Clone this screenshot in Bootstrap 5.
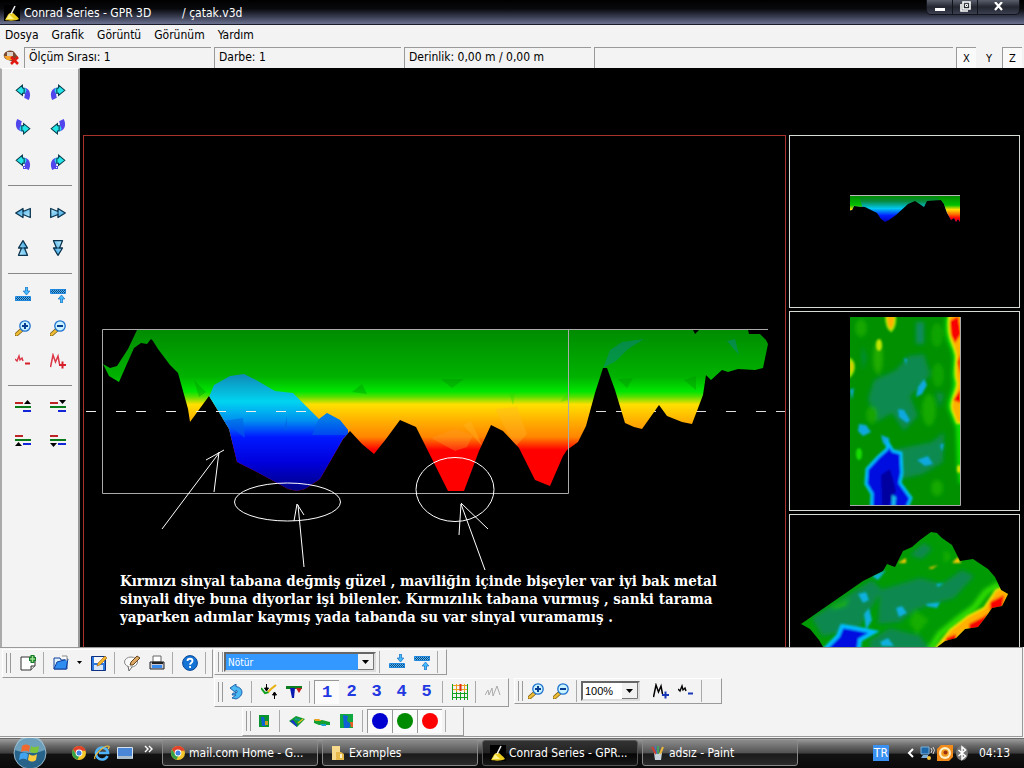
<!DOCTYPE html>
<html lang="tr">
<head>
<meta charset="utf-8">
<meta name="viewport" content="width=device-width, initial-scale=1">
<title>Conrad Series - GPR 3D</title>
<link href="https://cdn.jsdelivr.net/npm/bootstrap@5.3.0/dist/css/bootstrap.min.css" rel="stylesheet">
<style>
body{font-family:"DejaVu Sans Condensed","DejaVu Sans",sans-serif;font-size:12px;line-height:16px;color:#000;background:#f3f3f3}
svg{display:block;flex:none}
button{font:inherit;color:inherit}
.ico{width:16px;height:16px}
.title-bar{height:25px;background:linear-gradient(#000 0,#08090c 35%,#35394c 65%,#6b7190 96%,#1b1d2c 96%);color:#fff;white-space:pre}
.win-keys{height:15px;border:1px solid #12141c;border-top:0;border-radius:0 0 5px 5px;background:linear-gradient(#5a5e6c,#23262f 50%,#3a3f50);margin-right:4px}
.win-keys button{border:0;background:none;padding:0 0 2px;color:#fff;width:25px;display:flex;justify-content:center;align-items:center}
.win-keys button+button{border-left:1px solid #12141c}
.win-keys button:last-child{width:42px}
.menu-bar{height:22px;padding:0 5px 2px;gap:13px}
.menu-bar a{color:#000;text-decoration:none}
.status-bar{height:21px;gap:3px;padding:0 2px 0 3px}
.status-cell{border-left:1px solid #999;border-top:1px solid #999;padding:1px 4px;flex:none;white-space:nowrap}
.cell-m{width:187px}
.axis-key{width:20px;border:0;background:none;padding:2px 0 0;font-size:11px;line-height:15px}
.axis-key.on{border-left:1px solid #999;border-top:1px solid #999;background:#fafafa;padding-top:1px}
.tool-side{width:80px;flex:none;border-top:1px solid #fff;border-left:2px solid #aaa;border-right:2px solid #999;padding:0 3px}
.tool-side section{display:grid;grid-template-columns:35px 35px;grid-auto-rows:35px;justify-content:center}
.tool-side hr{margin:0 3px;border-color:#888;opacity:1}
.tool-side button,.tb-key{border:0;background:none;padding:0;display:flex;align-items:center;justify-content:center}
.t-turn{padding:5px 0 6px}.t-move{padding:9px 0 8px}
.tool-side .t-zoom,.tool-side .t-level{grid-auto-rows:33px;padding:4px 0 8px}
.stage{background:#000;padding:67px 4px 0 3px;gap:3px}
.view-main{border:1px solid #a8322c;border-bottom:0}
.view-main svg,.view-col svg{width:100%;height:auto}
.view-col{width:231px;gap:3px;flex:none}
.view-s{border:1px solid #d4dcd4}
.note-text{font:bold 15px "DejaVu Serif Condensed","DejaVu Serif",serif;fill:#fff}
.dock{border-top:1px solid #999;border-bottom:1px solid #999;border-right:1px solid #999;padding:1px 0 0 2px;margin:0 1px 1px 0}
.dock-row{height:29px}
.row-2{margin-left:212px;gap:5px}.row-3{margin-left:240px}
.tbar{height:29px;border:1px solid #fff;border-right-color:#999;border-bottom-color:#999;padding:0 3px 2px;flex:none}
.tbar.low{height:26px;padding-bottom:0}
.tbar-main{width:211px}.tbar-pal{width:233px;margin-left:1px}.tbar-lay{width:295px}.tbar-mag{width:208px}.tbar-view{width:222px}
.grip{width:5px;height:20px;border:solid #999;border-width:0 1px;flex:none}
.vsep{width:1px;height:22px;background:#aaa;margin:0 4px 0 3px;flex:none}
.tb-key{width:25px;height:24px;flex:none}
.tb-key.on{background:#fbfbfb;border-left:1px solid #999;border-top:1px solid #999}
.tb-num{font:bold 17px "Liberation Mono",monospace;color:#2238e0}
.caret-key{width:13px}
.pick{position:relative;flex:none}
.pick select{display:block;width:100%;height:20px;border:2px solid #666;border-right-color:#ddd;border-bottom-color:#ddd;border-radius:0;padding:0 2px;font:11px/15px "DejaVu Sans Condensed",sans-serif;background:#fff;appearance:none}
.pick svg{position:absolute;right:2px;top:2px;pointer-events:none}
.pick-pal{width:152px;margin-left:1px}.pick-pal select{background:#3398ff;color:#fff;font-size:10px}
.pick-mag{width:59px}.pick-mag select{font-family:"Liberation Sans",sans-serif}
.task-bar{height:30px;background:linear-gradient(#555 0,#999 5%,#6a6a6a 25%,#3d3d3d 50%,#121212 54%,#090909);color:#fff}
.quick{gap:7px;padding-left:12px}
.quick button{border:0;background:none;padding:0;color:#fff}
.task-list{gap:4px;margin-left:9px;min-width:0}
.task-win{width:156px;height:26px;border:1px solid #888;border-radius:3px;background:linear-gradient(#888,#555 48%,#1b1b1b 54%,#2b2b2b);color:#fff;padding:0 7px;gap:3px;text-align:left;white-space:nowrap}
.task-win.on{background:linear-gradient(#333,#222 48%,#050505 54%,#181818);border-color:#555}
.tray{gap:1px;margin-left:auto;padding-right:14px}
.lang-tag{width:16px;height:16px;background:#3a90f0;text-align:center;margin-right:17px}
</style>
</head>
<body class="d-flex flex-column min-vh-100">
<svg width="0" height="0" class="position-absolute" aria-hidden="true">
<defs>
<linearGradient id="sky" x1="0" y1="0" x2="1" y2="1"><stop offset="0" stop-color="#bff0ff"/><stop offset="1" stop-color="#2b9be0"/></linearGradient>
<pattern id="chk" width="2" height="2" patternUnits="userSpaceOnUse"><path fill="#4ab4ff" d="M0 0h2v2H0z"/><path fill="#134a7c" d="M0 0h1v1H0zM1 1h1v1H1z"/></pattern>
<symbol id="turn" viewBox="1 1 14 14"><path d="M8 4c5 0 8 5 5 11l-4-2c1-3 1-4-1-4z" fill="#5046ec"/><path d="M8 4c2 0 3 1 3 3l-1 2H8z" fill="#2bd4f0"/><path d="M2 6.500 7.500 2v2.500L9 5v4H7.500v2z" fill="#22e6e8" stroke="#073a4a" stroke-width=".9"/></symbol>
<symbol id="turn-dot" viewBox="0 0 16 16"><use href="#turn"/><path d="M8 12h3v3H8z" fill="#5046ec"/><path d="M9 13h1v1H9z" fill="#fff"/></symbol>
<symbol id="ff" viewBox="0 0 16 16"><path d="M.7 3.500 8 6.500V3.500l7.300 4.500L8 12.500v-3l-7.300 3z" fill="url(#sky)" stroke="#0b3550" stroke-width="1.300" stroke-linejoin="round"/><path d="M8 6.500v3" stroke="#0b3550"/></symbol>
<symbol id="press" viewBox="0 0 16 16"><path d="M0 10h16v4H0z" fill="url(#chk)"/><path d="M.5 9.500h15v4H.5z" fill="none" stroke="#1e86dc"/><path d="M10.500 0h2v4h2.300l-3.300 4-3.300-4h2.300z" fill="#45bcff" stroke="#126cc0" stroke-width=".7"/></symbol>
<symbol id="lens" viewBox="0 0 16 16"><path d="m1.500 14.500 5-4.500" stroke="#795a10" stroke-width="4" stroke-linecap="round"/><path d="m1.500 14.500 4.500-4" stroke="#eebd36" stroke-width="2.400" stroke-linecap="round"/><circle cx="10" cy="6" r="5.200" fill="#c9f3ff" stroke="#1d70ce" stroke-width="1.300"/><path d="M7 6h6" stroke="#063c92" stroke-width="2"/></symbol>
<symbol id="lens-p" viewBox="0 0 16 16"><use href="#lens"/><path d="M10 3v6" stroke="#063c92" stroke-width="2"/></symbol>
<symbol id="wave-s" viewBox="0 0 16 16"><path d="m0 6 2 2 2-5 1 4 2-2 1 3" fill="none" stroke="currentColor" stroke-width="1.400"/><path d="M10 10.500h5" stroke="var(--pm)" stroke-width="2"/></symbol>
<symbol id="wave-b" viewBox="0 0 16 16"><path d="M.5 14 3 2l2.500 7L8 3l1.500 8" fill="none" stroke="currentColor" stroke-width="1.500"/><path d="M9 12h7M12.500 8.500v7" stroke="var(--pm)" stroke-width="2"/></symbol>
<symbol id="lv-tri" viewBox="0 0 16 16"><path d="M0 3h8v2H0z" fill="#bd2424"/><path d="M0 7h16v2H0z" fill="#087a18"/><path d="M8 11h8v2H8z" fill="#1226d8"/></symbol>
<symbol id="chrome" viewBox="0 0 16 16"><circle cx="8" cy="8" r="7" fill="#f3c62b"/><path d="M2 4.500a7 7 0 0 1 12.700 1.300H8L6 10z" fill="#e2412c"/><path d="M2 4.500 5.500 10l2.800 1-1.800 3.800A7 7 0 0 1 2 4.500" fill="#34a148"/><circle cx="8" cy="8" r="3.400" fill="#fff"/><circle cx="8" cy="8" r="2.500" fill="#3f82e4"/></symbol>
<symbol id="gpr" viewBox="0 0 16 16"><path d="M0 0h16v16H0z" fill="#000"/><path d="M1 15c1-1 2-5 5-7h3c2 2 4 3 6 6-3 2-10 2-14 1" fill="#eacb20"/><path d="M5 9c-1 3-2 4-3 5h8z" fill="#fff28a"/><path d="m7 9 4-8" stroke="#eee" stroke-width="1.500"/></symbol>
<symbol id="drop" viewBox="0 0 16 16"><path d="M0 0h16v16H0z" fill="#f1f1f1"/><path d="M15.500 0v15.500H0" fill="none" stroke="#777"/><path d="M4 6h7L7.500 10z"/></symbol>
<linearGradient id="warm" gradientUnits="userSpaceOnUse" x1="0" y1="330" x2="0" y2="492"><stop offset="0" stop-color="#008c00"/><stop offset=".29" stop-color="#00b200"/><stop offset=".38" stop-color="#00e600"/><stop offset=".41" stop-color="#50e000"/><stop offset=".46" stop-color="#ffe000"/><stop offset=".56" stop-color="#ffb000"/><stop offset=".66" stop-color="#ff8600"/><stop offset=".74" stop-color="#ff0000"/></linearGradient>
<linearGradient id="cold" gradientUnits="userSpaceOnUse" x1="0" y1="373" x2="0" y2="492"><stop offset="0" stop-color="#1086b4"/><stop offset=".24" stop-color="#00d4f0"/><stop offset=".4" stop-color="#0090f0"/><stop offset=".54" stop-color="#0018ff"/><stop offset=".75" stop-color="#0000dc"/><stop offset="1" stop-color="#000080"/></linearGradient>
<linearGradient id="warm2" gradientUnits="userSpaceOnUse" x1="0" y1="196" x2="0" y2="222"><stop offset="0" stop-color="#008c00"/><stop offset=".35" stop-color="#00c000"/><stop offset=".52" stop-color="#ffe000"/><stop offset=".7" stop-color="#ff7000"/><stop offset=".85" stop-color="#f00"/></linearGradient>
<linearGradient id="cold2" gradientUnits="userSpaceOnUse" x1="0" y1="196" x2="0" y2="222"><stop offset="0" stop-color="#008c00"/><stop offset=".2" stop-color="#088a40"/><stop offset=".48" stop-color="#00c8f0"/><stop offset=".75" stop-color="#0020ff"/><stop offset="1" stop-color="#0000b0"/></linearGradient>
<filter id="b1" x="-30%" y="-30%" width="160%" height="160%"><feGaussianBlur stdDeviation="1"/></filter>
<filter id="b2" x="-50%" y="-50%" width="200%" height="200%"><feGaussianBlur stdDeviation="2.200"/></filter>
</defs>
</svg>

<header class="title-bar d-flex align-items-center ps-1">
  <svg class="ico me-1"><use href="#gpr"/></svg><span>Conrad Series - GPR 3D         / çatak.v3d</span>
  <div class="win-keys d-flex ms-auto align-self-start">
    <button aria-label="Simge durumuna küçült"><svg width="10" height="9"><path d="M0 6h10v3H0z" fill="#fff"/></svg></button>
    <button aria-label="Önceki boyut"><svg width="11" height="11" fill="none" stroke="#fff"><path d="M1 3v7h7" stroke-width="1.600"/><path d="M3 1h7v7H3z" stroke-width="1.600"/><path d="M5.500 3.500h2v2h-2z"/></svg></button>
    <button aria-label="Kapat"><svg width="10" height="9"><path d="m1 0 7 8M8 0 1 8" stroke="#fff" stroke-width="2.200"/></svg></button>
  </div>
</header>

<nav class="menu-bar d-flex align-items-center">
  <a href="#">Dosya</a><a href="#">Grafik</a><a href="#">Görüntü</a><a href="#">Görünüm</a><a href="#">Yardım</a>
</nav>

<div class="status-bar d-flex">
  <svg width="18" height="20" viewBox="0 0 18 20"><path d="M1 7c2-4 9-5 11-1l3 4-4 5-6-2c-3-1-5-3-4-6" fill="#7b4a30"/><path d="M1 9h8v4H4z" fill="#f7a42c"/><path d="M4 5h6v4H4z" fill="#d8cfc8"/><path d="m8 10 7 7m0-7-7 7" stroke="#e01a10" stroke-width="2.600"/></svg>
  <div class="status-cell cell-m">Ölçüm Sırası: 1</div>
  <div class="status-cell cell-m">Darbe: 1</div>
  <div class="status-cell cell-m">Derinlik: 0,00 m / 0,00 m</div>
  <div class="status-cell flex-fill"></div>
  <button class="axis-key on">X</button><button class="axis-key">Y</button><button class="axis-key on">Z</button>
</div>

<div class="d-flex flex-grow-1">
  <aside class="tool-side">
    <section class="t-turn">
      <button aria-label="Sola çevir"><svg class="ico"><use href="#turn"/></svg></button>
      <button aria-label="Sağa çevir"><svg class="ico" viewBox="0 0 16 16"><use href="#turn" transform="matrix(-1 0 0 1 16 0)"/></svg></button>
      <button aria-label="Aşağı sağa çevir"><svg class="ico" viewBox="0 0 16 16"><use href="#turn" transform="rotate(180 8 8)"/></svg></button>
      <button aria-label="Aşağı sola çevir"><svg class="ico" viewBox="0 0 16 16"><use href="#turn" transform="matrix(1 0 0 -1 0 16)"/></svg></button>
      <button aria-label="Sola yatır"><svg class="ico"><use href="#turn-dot"/></svg></button>
      <button aria-label="Sağa yatır"><svg class="ico" viewBox="0 0 16 16"><use href="#turn-dot" transform="matrix(-1 0 0 1 16 0)"/></svg></button>
    </section>
    <hr>
    <section class="t-move">
      <button aria-label="Sola"><svg class="ico" viewBox="0 0 16 16"><use href="#ff" transform="rotate(180 8 8)"/></svg></button>
      <button aria-label="Sağa"><svg class="ico"><use href="#ff"/></svg></button>
      <button aria-label="Yukarı"><svg class="ico" viewBox="0 0 16 16"><use href="#ff" transform="rotate(-90 8 8)"/></svg></button>
      <button aria-label="Aşağı"><svg class="ico" viewBox="0 0 16 16"><use href="#ff" transform="rotate(90 8 8)"/></svg></button>
    </section>
    <hr>
    <section class="t-zoom" style="--pm:#d81e2a">
      <button aria-label="Bastır"><svg class="ico"><use href="#press"/></svg></button>
      <button aria-label="Kaldır"><svg class="ico" viewBox="0 0 16 16"><use href="#press" transform="matrix(1 0 0 -1 0 16)"/></svg></button>
      <button aria-label="Yakınlaştır"><svg class="ico"><use href="#lens-p"/></svg></button>
      <button aria-label="Uzaklaştır"><svg class="ico"><use href="#lens"/></svg></button>
      <button aria-label="Sinyal azalt" class="text-danger"><svg class="ico"><use href="#wave-s"/></svg></button>
      <button aria-label="Sinyal artır" class="text-danger"><svg class="ico"><use href="#wave-b"/></svg></button>
    </section>
    <hr>
    <section class="t-level">
      <button aria-label="Üst sınır yukarı"><svg class="ico" viewBox="0 0 16 16"><use href="#lv-tri"/><path d="m9 5 3.500-4L16 5z"/></svg></button>
      <button aria-label="Üst sınır aşağı"><svg class="ico" viewBox="0 0 16 16"><use href="#lv-tri"/><path d="M9 1h7l-3.500 4z"/></svg></button>
      <button aria-label="Alt sınır yukarı"><svg class="ico" viewBox="0 0 16 16"><use href="#lv-tri"/><path d="m0 14 3.500-4L7 14z"/></svg></button>
      <button aria-label="Alt sınır aşağı"><svg class="ico" viewBox="0 0 16 16"><use href="#lv-tri"/><path d="M0 11h7l-3.500 4z"/></svg></button>
    </section>
  </aside>

  <main class="stage d-flex flex-grow-1 overflow-hidden">
    <div class="view-main flex-fill">
      <svg viewBox="84 136 701 511">
        <path d="M86 411.500h699" stroke="#ddd" stroke-dasharray="10 20 10 10 10 20"/>
        <clipPath id="prof"><path d="M103 364 110 368 117 366 128 349 137 330H693l2 4 4-4H748l1 4h11l6 6 2 4-5 24-8 2-17-1-10 3-6-2-11 10-5-5-3 20-11 29-10-2-15-6-8-11-17 24-8-2-9-4-10-33-8-22h-4l-8 25-9 33-8 16-11 8-4 6-13 30-15-6-16-32-16-17-12-6-12 26-15 40h-16l-18-36-14-28-16-7-14 19-12 15-12-10-12-13-7 8-8 14-15 26-15 10-8 2-9-2-33-18-18-9-8-33-12-20-8-13-19 26-2-13-10-36-8-8-12-16-5-8-2-2-4 5-6-1-7 5-8 18-7 16-10-6z"/></clipPath>
        <g clip-path="url(#prof)">
          <path d="M100 329h670v165H100z" fill="url(#warm)"/>
          <g opacity=".35">
            <path d="m441 379 11 9 12-9zM618 379l9 9 6-10zM684 380l12 10v-14zM194 380l12 12-7 5zM352 392l10-8 5 10z" fill="#008c00"/>
            <path d="m603 368 7-18 12-8 22-3-16 10-12 12zM727 341l12 14-4-16z" fill="#107bcc"/>
            <path d="m509 393 4 12 2-12zM560 402l8-10v8z" fill="#28d800"/>
            <path d="m463 425 20 22-12-26zM495 409l22-2 10 27-12 13z" fill="#ffb728"/>
            <path d="m431 438 24 13 12-4 6-12-18-6z" fill="#ff9a28"/>
          </g>
          <path d="m209 397 5-12 16-9 14-2 12 6 19 11 18 2 10 10 16 16 8-6 13 7 8 10v64H225v-70z" fill="url(#cold)"/>
          <path d="m223 421 20-3 2 20zM284 430l3-14v14zM318 420l9-7 13 7 8 10v5h-36z" fill="#0060e4" opacity=".55"/>
        </g>
        <path d="M86 411.500h220" stroke="#eee" stroke-dasharray="10 20 10 10 10 20"/>
        <path d="M768 329.500H102.500v164h466v-164" fill="none" stroke="#aaa"/>
        <g fill="none" stroke="#fff">
          <path d="m162 529 57-76M206 460l18-10M219 452l-5 40M304 567l-6-62M294 521l3-17 7 11M485 570l-24-66-2 31M461 503l27 26"/>
          <ellipse cx="287.500" cy="502" rx="53" ry="19"/><ellipse cx="455" cy="489.500" rx="39" ry="32"/>
        </g>
        <text class="note-text"><tspan x="120" y="586">Kırmızı sinyal tabana değmiş güzel , maviliğin içinde bişeyler var iyi bak metal</tspan><tspan x="120" y="604">sinyali diye buna diyorlar işi bilenler. Kırmızılık tabana vurmuş , sanki tarama</tspan><tspan x="120" y="622">yaparken adımlar kaymış yada tabanda su var sinyal vuramamış .</tspan></text>
      </svg>
    </div>
    <div class="view-col d-flex flex-column">
      <div class="view-s">
        <svg viewBox="790 136 229 171">
          <clipPath id="p1"><path d="M850 196h110v26l-2-3-2 3-2-4-3 2-4-7-3-9-3-4-14 1-3 6-9-6-7 3-12 11-7 5-4 2-4-3-4-6-12-6-11-1-2 4-5 1z"/></clipPath>
          <g clip-path="url(#p1)"><path fill="url(#cold2)" d="M850 195h110v28H850z"/><path fill="url(#warm2)" d="M850 195h9l4 15-6 5h-7zM938 195h22v30h-18z"/></g>
          <path d="M850 195.500h110" stroke="#b8b8b8"/>
        </svg>
      </div>
      <div class="view-s">
        <svg viewBox="790 312 229 198">
          <clipPath id="p2"><path d="M850 317h110v188H850z"/></clipPath>
          <g clip-path="url(#p2)"><path d="M850 317h110v188H850z" fill="#009000"/>
            <g filter="url(#b2)">
              <path d="M874 380l22-10 12-14 16-2 6 20-8 12-12 10 8 20-14 15-12-18-14 8-10-22zM892 450l40-8 12-10-1 30-20 12-26 6zM862 345l4 12-3 14zM936 392l8 2-4 14z" fill="#0a8a50"/>
              <path d="M916 322h8v22h-8z" fill="#0a8a60"/>
              <ellipse cx="878" cy="358" rx="5" ry="16" fill="#20ac00"/><ellipse cx="929" cy="410" rx="7" ry="16" fill="#18aa00"/><ellipse cx="937" cy="335" rx="6" ry="12" fill="#10a400"/><ellipse cx="938" cy="375" rx="6" ry="12" fill="#10a400"/><ellipse cx="937" cy="488" rx="6" ry="8" fill="#16aa00"/><ellipse cx="861" cy="328" rx="6" ry="9" fill="#16a800"/><ellipse cx="872" cy="415" rx="6" ry="9" fill="#14a400"/>
              <path d="M946 317c-2 20 3 26 6 34 3 10-1 20 1 30 1 10-6 18-5 27l8 20 1 30 2 25h8V317z" fill="#10e000"/>
            </g>
            <g filter="url(#b1)">
              <path d="M949 315c-2 25 4 26 7 40 1 10-3 16 1 28 0 10-8 18-5 27l5 13h5V315z" fill="#ffb000" stroke="#d8f000" stroke-width="2"/>
              <path d="M886 315c0 8 2 14 5 16 3-3 5-8 4-16zM850 359c5 3 5 12 0 17z" fill="#ffb000" stroke="#a0e800" stroke-width="2"/>
              <ellipse cx="879" cy="345" rx="3" ry="6" fill="#c0e800"/><ellipse cx="859" cy="454" rx="3" ry="6" fill="#18dc00"/><ellipse cx="959" cy="469" rx="2" ry="4" fill="#e8e800"/>
              <path d="m950 321 8-5 3 18-6 9-4-8zM957 362l4-8v22zM953 400l8-11v14z" fill="#f80000"/>
              <path d="m924 379 3 6-5 9-6 3 2-10zM898 409l6 1 6 10-3 3-8-6zM859 424l7 1 5 7-8 4-5-5zM917 460l11-4 5 8-8 2zM850 390l4-2-2 12zM881 435l8 3 1 12-7-7zM904 358l3 1-1 6zM940 445l4-2-2 9z" fill="#0aa8e0"/>
              <path d="m867 469 11-12 9-8 1-6 5 8 8 2 1 20-2 10 11 15-4 10-2 10h-34l1-24-6-10z" fill="#0010e0" stroke="#00bcff" stroke-width="3"/>
              <path d="m881 475 9-6 4 14 2 8-8 15-6-1z" fill="#0000a0"/><path d="m892 495 4 2-1 10h-3z" fill="#18bce8"/>
            </g>
          </g>
          <path d="M850 505.500h110.500V317" fill="none" stroke="#aaa"/>
        </svg>
      </div>
      <div class="view-s border-bottom-0 flex-grow-1">
        <svg viewBox="790 515 229 132">
          <clipPath id="p3"><path d="M801 624 863 581 883 571 887 564 895 567 903 551 912 547 920 540 931 532 937 533 942 538 952 545 960 561 973 559 988 569 995 577 1001 590 1008 594 1002 606 992 608 985 618 978 627 965 629 956 638 945 641 937 647 934 652 826 652 819 640 810 629z"/></clipPath>
          <g clip-path="url(#p3)"><path d="M798 520h220v130H798z" fill="#009a04"/>
            <g filter="url(#b2)">
              <path d="m880 590 40-12 22 6 20-14 12 6-20 22-40 12-14 12-22 2zM812 618l60-38 10 10-24 40-36 6zM870 640l20-12 30 8 10 14h-60zM910 555l14-12 8 6-10 10z" fill="#0a8850"/>
              <path d="M832 606l18-8-4 8-14 4zM915 610l14 10-12 14-8-12zM944 550l8 6-8 8z" fill="#14ae00"/>
              <path d="m1000 584-14 8-12 16-14 10-20 16-10 16" fill="none" stroke="#30e000" stroke-width="6"/>
            </g>
            <g filter="url(#b1)">
              <path d="m1006 586-10 4-12 18-16 8-18 14-14 18h30l60-50z" fill="#ffb000" stroke="#e8f000" stroke-width="2"/>
              <path d="m990 602 14-7-2 16-12 2zM969 624l14-7 6-4-8 18h-12zM946 638l10-4v8h-10z" fill="#f80000"/>
              <path d="m898 563 8-5v5zM928 568l10-3-6 4zM952 563l6-6 3 6z" fill="#ffc800"/>
              <path d="m858 594 8-2 3 8-6 3zM896 608l6-2 5 7-8 4zM926 604l14-2-3 6-10-2zM936 584l8-1-6 4zM864 614l5-6 3 12-6 10zM872 576l14-6-8 10zM880 642l8-4 6 8h-12z" fill="#0ab0e0"/>
              <path d="m820 654 18-18 4-10 12 2 20 4-14 8-2 16z" fill="#0010e0" stroke="#00bcff" stroke-width="4"/>
            </g>
          </g>
        </svg>
      </div>
    </div>
  </main>
</div>

<section class="dock" style="--pm:#1838b8">
  <div class="dock-row d-flex align-items-start">
    <div class="tbar tbar-main d-flex align-items-center"><span class="grip me-1"></span>
      <button class="tb-key" aria-label="Yeni"><svg class="ico" viewBox="0 0 16 16"><path d="M1 2h14v9l-4 4H1z" fill="#fff" stroke="#333"/><path d="M11 15v-4h4" fill="#ddd" stroke="#333"/><path d="M12.500 0v8M9 4h7" stroke="#137a25" stroke-width="4"/><path d="M12.500 1v6M10 4h5" stroke="#9be08e" stroke-width="1.500"/></svg></button><span class="vsep"></span>
      <button class="tb-key" aria-label="Aç"><svg class="ico" viewBox="0 0 16 16"><path d="M1 14V3h6l1 2h6v9z" fill="#dff2ff" stroke="#113c9a"/><path d="m4 7 11-3-2 10H1z" fill="#2f8cf0" stroke="#113c9a"/><path d="M9 1h5v5" fill="#fff" stroke="#888"/></svg></button>
      <button class="tb-key caret-key" aria-label="Son dosyalar"><svg width="5" height="3"><path d="M0 0h5L2.500 3z"/></svg></button>
      <button class="tb-key" aria-label="Kaydet"><svg class="ico" viewBox="0 0 16 16"><path d="M.5 1.500h14v14H.5z" fill="#2c78dc" stroke="#0c3180"/><path d="M3 2h10v6H3z" fill="#f7f7f7"/><path d="M3 10h9v5H3z" fill="#d6e6f8"/><path d="m6 11 1-3 7-7 2 2-7 7z" fill="#f2b62d" stroke="#a06010" stroke-width=".6"/></svg></button><span class="vsep"></span>
      <button class="tb-key" aria-label="Not"><svg class="ico" viewBox="0 0 16 16"><ellipse cx="7" cy="7" rx="6.500" ry="5" fill="#fafafa" stroke="#888"/><path d="m4 11 1 5 3-4" fill="#fff" stroke="#666"/><path d="m6 10 1-3 6-6 3 2-7 7z" fill="#dda864" stroke="#55350f" stroke-width=".9"/></svg></button>
      <button class="tb-key" aria-label="Yazdır"><svg class="ico" viewBox="0 0 16 16"><path d="M4 1h8v6H4z" fill="#fff" stroke="#666"/><path d="M1 7h14v7H1z" fill="#c7c9d4" stroke="#222"/><path d="M3 10h10v3H3z" fill="#3b8cf0"/><path d="M3 7h11v2H3z" fill="#222"/></svg></button><span class="vsep"></span>
      <button class="tb-key" aria-label="Yardım"><svg class="ico" viewBox="0 0 16 16"><circle cx="8" cy="8" r="7.400" fill="#1673d6" stroke="#0a4796"/><path d="M5.500 6C5.500 3 10.500 3 10.500 6c0 1.800-2.400 1.700-2.400 3.800M8.100 11v2" fill="none" stroke="#fff" stroke-width="1.800"/></svg></button><span class="vsep"></span>
    </div>
    <div class="tbar low tbar-pal d-flex align-items-center"><span class="grip"></span>
      <div class="pick pick-pal"><select aria-label="Renk"><option>Nötür</option></select><svg class="ico"><use href="#drop"/></svg></div><span class="vsep"></span>
      <button class="tb-key" aria-label="Bastır"><svg class="ico"><use href="#press"/></svg></button>
      <button class="tb-key" aria-label="Kaldır"><svg class="ico" viewBox="0 0 16 16"><use href="#press" transform="matrix(1 0 0 -1 0 16)"/></svg></button><span class="vsep"></span>
    </div>
  </div>
  <div class="dock-row row-2 d-flex align-items-start">
    <div class="tbar tbar-lay d-flex align-items-center"><span class="grip"></span>
      <button class="tb-key" aria-label="Geri al"><svg class="ico" viewBox="0 0 16 16"><path d="m2 4 6-4v2.500c8 1 8 10 0 12.500l-4-1 4-3H4l1-2c5 1 5-2 3-3v3z" fill="#4bb9f4" stroke="#1258a6" stroke-width=".9"/></svg></button><span class="vsep"></span>
      <button class="tb-key" aria-label="Kesit"><svg class="ico" viewBox="0 0 16 16"><path d="m0 4 4 5 4-1" fill="none" stroke="#10a020" stroke-width="2"/><path d="m7 8 3-3 5-4" fill="none" stroke="#e8b010" stroke-width="2"/><path d="M5.500 0v5M3.500 4h4l-2 3zM13.500 15v-5m-2 1h4l-2-3z" stroke="#000"/></svg></button>
      <button class="tb-key" aria-label="Derinlik kesiti"><svg class="ico" viewBox="0 0 16 16"><path d="M0 2h16v3H0z" fill="#0d7e20"/><path d="M4 4h5L8 14H6z" fill="#0818b0"/><path d="M10 4h6l-3 5z" fill="#c41a1a"/></svg></button><span class="vsep"></span>
      <button class="tb-key tb-num on">1</button><button class="tb-key tb-num">2</button><button class="tb-key tb-num">3</button><button class="tb-key tb-num">4</button><button class="tb-key tb-num">5</button><span class="vsep"></span>
      <button class="tb-key" aria-label="Izgara"><svg class="ico" viewBox="0 0 16 16" fill="none"><path d="M0 1.500h16M0 5.500h16M4.500 0v9M12.500 0v9" stroke="#eda020"/><path d="M8.500 0v7" stroke="#e03010" stroke-width="2"/><path d="M0 9.500h16M0 13.500h16M.5 0v16M4.500 8v8M8.500 8v8M12.500 8v8M15.500 0v16" stroke="#12a020"/></svg></button><span class="vsep"></span>
      <button class="tb-key" aria-label="Dalga"><svg class="ico" viewBox="0 0 16 16"><path d="m0 11 3-5 1 5 3-7 1 8 4-10 3 9" fill="none" stroke="#aaa"/></svg></button>
    </div>
    <div class="tbar low tbar-mag d-flex align-items-center"><span class="grip"></span>
      <button class="tb-key" aria-label="Yakınlaştır"><svg class="ico"><use href="#lens-p"/></svg></button>
      <button class="tb-key" aria-label="Uzaklaştır"><svg class="ico"><use href="#lens"/></svg></button><span class="vsep"></span>
      <div class="pick pick-mag"><select aria-label="Ölçek"><option>100%</option></select><svg class="ico"><use href="#drop"/></svg></div>
      <button class="tb-key ms-2" aria-label="Sinyal artır"><svg class="ico"><use href="#wave-b"/></svg></button>
      <button class="tb-key" aria-label="Sinyal azalt"><svg class="ico"><use href="#wave-s"/></svg></button><span class="vsep"></span>
    </div>
  </div>
  <div class="dock-row row-3 d-flex">
    <div class="tbar tbar-view d-flex align-items-center"><span class="grip"></span>
      <button class="tb-key" aria-label="Üstten"><svg class="ico" viewBox="0 0 16 16"><path d="M3 2h10v12H3z" fill="#0a9430"/><path d="M5 4h3l2 9H6z" fill="#0c62d0"/><path d="M9 8h3v4H9z" fill="#c8a020"/></svg></button><span class="vsep"></span>
      <button class="tb-key" aria-label="Perspektif"><svg class="ico" viewBox="0 0 16 16"><path d="m0 8 7-5 9 3-8 8z" fill="#129a30"/><path d="m1 8 3-1 4 5v2z" fill="#1a30d0"/><path d="m9 10 5-4" stroke="#e8c020" stroke-width="1.500"/><path d="m6 6 5 1" stroke="#109898" stroke-width="2"/></svg></button>
      <button class="tb-key" aria-label="Yandan"><svg class="ico" viewBox="0 0 16 16"><path d="M0 7h8l8 2v3H5L0 10z" fill="#12a030"/><path d="M0 6h5l3 2H1z" fill="#e8a020"/><path d="M6 11h6v2H8z" fill="#18a0d0"/></svg></button>
      <button class="tb-key" aria-label="Önden"><svg class="ico" viewBox="0 0 16 16"><path d="M1 1h13v14H1z" fill="#10a840"/><path d="m4 2 5 1-1 5 4 3-2 4H5z" fill="#1060d8"/><path d="M11 9h3v5h-2z" fill="#e86020"/></svg></button><span class="vsep"></span>
      <button class="tb-key on" aria-label="Mavi"><svg class="ico"><circle cx="8" cy="8" r="8" fill="#0000d0"/></svg></button><button class="tb-key on" aria-label="Yeşil"><svg class="ico"><circle cx="8" cy="8" r="8" fill="#008a00"/></svg></button><button class="tb-key on" aria-label="Kırmızı"><svg class="ico"><circle cx="8" cy="8" r="8" fill="#f00"/></svg></button><span class="vsep"></span>
    </div>
  </div>
</section>

<footer class="task-bar d-flex align-items-center">
  <div class="quick d-flex align-items-center">
    <button aria-label="Başlat" class="me-3"><svg width="36" height="30" viewBox="0 0 36 30"><circle cx="18" cy="15" r="16" fill="#276288" stroke="#9ab8c8"/><path d="M3 12a15 15 0 0 1 30 0c-9 4-20 4-30 0" fill="#9cc8de" opacity=".6"/><path d="M10 8c3-2 5-2 8 0l-1 6c-3-2-5-1-8 0z" fill="#f06a30"/><path d="M19 8c3 2 5 1 8 0l-1 6c-3 2-5 1-8 0z" fill="#7cc43a"/><path d="M8 16c3-2 5-1 8 0l-1 6c-3-2-5-1-8 0z" fill="#40a4f0"/><path d="M17 16c3 2 5 2 8 0l-1 6c-3 2-5 2-8 0z" fill="#fcca3a"/></svg></button>
    <button aria-label="Chrome"><svg class="ico"><use href="#chrome"/></svg></button>
    <button aria-label="Internet Explorer"><svg class="ico" viewBox="0 0 16 16"><path d="M13.500 11A6 6 0 1 1 14 8H5" fill="none" stroke="#4fb4fa" stroke-width="2.600"/><path d="M1 14C-1 11 9 1 14 1c2 0 1 2 0 3" fill="none" stroke="#f2c339" stroke-width="1.200"/></svg></button>
    <button aria-label="Masaüstü"><svg class="ico" viewBox="0 0 16 16"><path d="M.5 2.500h15v11H.5z" fill="#4a86d8" stroke="#d5e2f0"/><path d="M1 11h14v3H1z" fill="#a8bccc"/></svg></button>
    <button class="mb-2 ms-1" aria-label="Diğer"><svg width="9" height="8"><path d="m1 1 3 3-3 3m4-6 3 3-3 3" fill="none" stroke="#fff" stroke-width="1.400"/></svg></button>
  </div>
  <div class="task-list d-flex">
    <button class="task-win d-flex align-items-center"><svg class="ico"><use href="#chrome"/></svg>mail.com Home - G...</button>
    <button class="task-win d-flex align-items-center"><svg class="ico" viewBox="0 0 16 16"><path d="M2 1h8v14H2z" fill="#f6d98a"/><path d="M6 7h5l3 2v6H6z" fill="#e7b84a"/><path d="M10 9h2v4h-2z" fill="#fff2c4"/></svg>Examples</button>
    <button class="task-win on d-flex align-items-center"><svg class="ico"><use href="#gpr"/></svg>Conrad Series - GPR...</button>
    <button class="task-win d-flex align-items-center"><svg class="ico" viewBox="0 0 16 16"><path d="M4 8h8l-1 7H5z" fill="#c9d4dc"/><path d="m6 9-4-7" stroke="#d04030" stroke-width="2"/><path d="M8 9V1" stroke="#40a060" stroke-width="2"/><path d="m10 9 3-7" stroke="#eab840" stroke-width="2"/><path d="m7 9-2-8" stroke="#4a70d0"/></svg>adsız - Paint</button>
  </div>
  <div class="tray d-flex align-items-center">
    <span class="lang-tag">TR</span>
    <svg width="8" height="10" class="me-1"><path d="M6 1 2 5l4 4" fill="none" stroke="#fff" stroke-width="2"/></svg>
    <svg class="ico" viewBox="0 0 16 16"><path d="M1 2h8v7H1z" fill="#1d68a8" stroke="#7cb0d8"/><path d="M3 10h5v3H1z" fill="#7cb0d8"/><circle cx="9" cy="13" r="2" fill="#f2c040"/><path d="M11 3q2 2 0 5m2-6q3 3 0 7" fill="none" stroke="#ddd"/></svg>
    <svg class="ico" viewBox="0 0 16 16"><path d="M4 0h12v12l-4 4H0V4z" fill="#f08a1a"/><circle cx="8" cy="8" r="6" fill="#fff0c8"/><circle cx="8" cy="8" r="3.800" fill="#f09a20"/><circle cx="8.500" cy="7.500" r="2" fill="#9a3010"/></svg>
    <svg class="ico" viewBox="0 0 16 16"><ellipse cx="8" cy="8" rx="6" ry="7.500" fill="#777"/><path d="m4.500 5 7 6L8 14V2l3.500 3-7 6" fill="none" stroke="#fff" stroke-width="1.500"/></svg>
    <time class="ms-2">04:13</time>
  </div>
</footer>
<script src="https://cdn.jsdelivr.net/npm/bootstrap@5.3.0/dist/js/bootstrap.bundle.min.js"></script>
</body>
</html>
